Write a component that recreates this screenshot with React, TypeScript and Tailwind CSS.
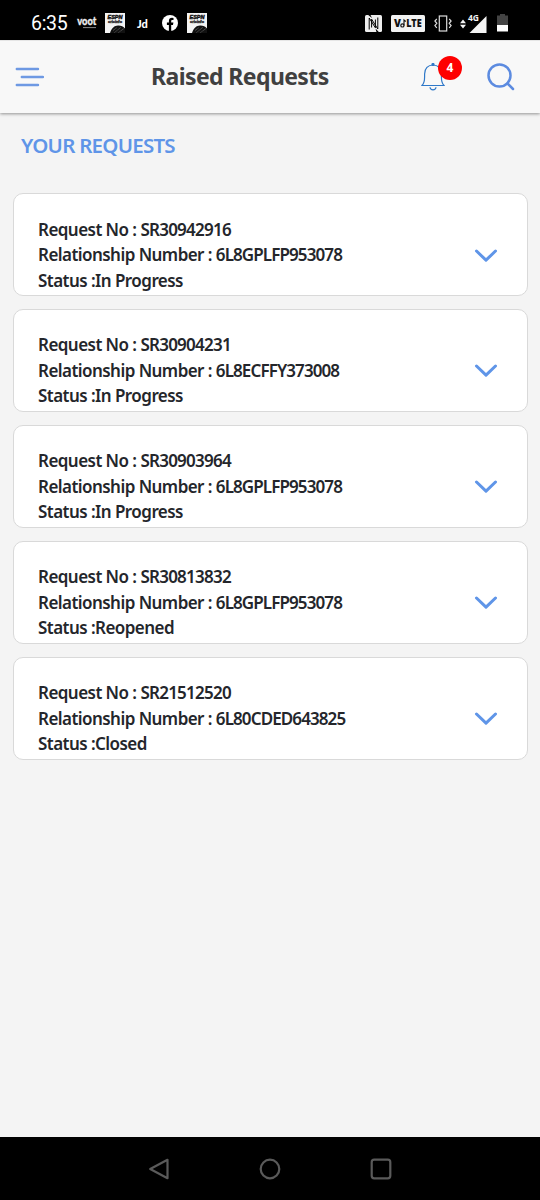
import clsx from "clsx";

interface ServiceRequest {
  id: string;
  relationship: string;
  status: string;
}

const REQUESTS: ServiceRequest[] = [
  { id: "SR30942916", relationship: "6L8GPLFP953078", status: "In Progress" },
  { id: "SR30904231", relationship: "6L8ECFFY373008", status: "In Progress" },
  { id: "SR30903964", relationship: "6L8GPLFP953078", status: "In Progress" },
  { id: "SR30813832", relationship: "6L8GPLFP953078", status: "Reopened" },
  { id: "SR21512520", relationship: "6L80CDED643825", status: "Closed" },
];

function CricinfoIcon({ className }: { className?: string }) {
  return (
    <svg viewBox="0 0 20 20" className={clsx("h-5 w-5 shrink-0 font-['Liberation_Sans',sans-serif]", className)}>
      <rect width="20" height="20" fill="#f4f4f4" />
      <text x="2.5" y="6" fontSize="5" fontWeight="900" fontStyle="italic" stroke="#111" strokeWidth=".4" textLength="15" lengthAdjust="spacingAndGlyphs" fill="#111">ESPN</text>
      <text x="3" y="10.2" fontSize="3.2" fontWeight="700" stroke="#222" strokeWidth=".3" textLength="14" lengthAdjust="spacingAndGlyphs" fill="#222">cricinfo</text>
      <path d="M5 20C6.5 15 9.5 12.8 13 12.6C16 12.5 18.5 13.6 20 15.5V20Z" fill="#111" />
      <path d="M8 17.5L12 14.5M9.5 19.5L16 14.2M13.5 19.5L19 15.5" stroke="#777" strokeWidth=".7" strokeDasharray="1 .5" />
    </svg>
  );
}

function StatusBar() {
  return (
    <div className="flex h-10 items-center bg-black pt-1.5 text-white">
      <span className="ml-[31px] w-[37px] pt-0.5 font-['Roboto'] text-[19.5px] leading-none tracking-[-0.3px]">6:35</span>
      <svg viewBox="0 0 22 18" className="ml-2 h-[18px] w-[22px] shrink-0 font-['Lato']">
        <text x="1.2" y="11" fontSize="11" fontWeight="900" textLength="19" lengthAdjust="spacingAndGlyphs" stroke="#eee" strokeWidth=".3" fill="#eee">voot</text>
        <path d="M7 13.6H20" stroke="#888" strokeWidth="1" />
      </svg>
      <CricinfoIcon className="ml-[7px]" />
      <span className="ml-3 w-3 font-['Lato'] text-[11px] leading-none font-black">Jd</span>
      <svg viewBox="0 0 16 16" className="ml-[13px] h-4 w-4 shrink-0">
        <circle cx="8" cy="8" r="8" fill="#fff" />
        <path d="M6.9 16V10H4.9V7.6H6.9V6C6.9 3.9 8.1 2.8 10 2.8L11.5 2.9V5H10.5C9.5 5 9.2 5.5 9.2 6.2V7.6H11.4L11 10H9.2V16Z" fill="#000" />
      </svg>
      <CricinfoIcon className="ml-[9px]" />

      <svg viewBox="0 0 17 17" className="ml-auto h-[17px] w-[17px] shrink-0">
        <rect width="17" height="17" rx="1.5" fill="#eee" />
        <path d="M4.2 14.5V3L10.4 12.8M12.8 2.5V14L6.6 4.2V12.5M10.4 12.8V4.5" fill="none" stroke="#000" strokeWidth="1" />
        <path d="M3.2 0H5.5L7 3M11.5 17H13.8L10.5 13.5" fill="#000" />
      </svg>
      <svg viewBox="0 0 34 17" className="ml-[9px] h-[17px] w-[34px] shrink-0">
        <rect width="34" height="17" rx="1.5" fill="#f2f2f2" />
        <text x="3" y="12.2" fontSize="10" fontWeight="900" fill="#111">V</text>
        <circle cx="11.4" cy="10.4" r="1.6" fill="none" stroke="#111" strokeWidth="1.2" />
        <path d="M13 10.5V5L14.8 6.5" fill="none" stroke="#111" strokeWidth="1.1" />
        <text x="15.2" y="12.2" fontSize="10" fontWeight="900" textLength="15.5" lengthAdjust="spacingAndGlyphs" fill="#111">LTE</text>
      </svg>
      <svg viewBox="0 0 18 17" className="ml-[9px] h-[17px] w-[18px] shrink-0" fill="none" stroke="#ddd" strokeWidth="1.2">
        <rect x="5.3" y="1" width="7.4" height="15" />
        <path d="M2.8 3.8L.9 6L2.8 8.3L.9 10.6L2.8 12.9M15.2 3.8L17.1 6L15.2 8.3L17.1 10.6L15.2 12.9" />
      </svg>
      <svg viewBox="0 0 27 22" className="mb-[3px] ml-2 h-[22px] w-[27px] shrink-0" fill="#f5f5f5">
        <path d="M3 8.6L6 12.2H0ZM3 17.4L0 13.8H6Z" />
        <path d="M9.5 22L26.5 5V22Z" />
        <text x="8" y="9.6" fontSize="8" fontWeight="700" textLength="11" lengthAdjust="spacingAndGlyphs" stroke="#000" strokeWidth="1.5" paintOrder="stroke">4G</text>
      </svg>
      <svg viewBox="0 0 11 18" className="mr-8 ml-2.5 h-[18px] w-[11px] shrink-0">
        <path d="M3 0H8V1.5H11V11H0V1.5H3Z" fill="#444" />
        <path d="M0 11H11V17.5H0Z" fill="#fff" />
      </svg>
    </div>
  );
}

function Header() {
  return (
    <header className="relative flex h-[73px] items-center border-t border-[#e5e5e5] bg-[#f8f8f8] shadow-[0_1px_3px_rgba(0,0,0,0.4)]">
      <svg viewBox="0 0 30 20" className="ml-[14px] h-5 w-[30px]" stroke="#6e99e3" strokeWidth="2.4" strokeLinecap="round">
        <path d="M2.8 2H24M7.8 10H29M2.8 18H24" />
      </svg>
      <h1 className="mb-[3px] ml-[107px] w-[180px] text-[23px] leading-8 font-bold tracking-[-0.6px] whitespace-nowrap text-[#404040]">Raised Requests</h1>
      <div className="relative ml-[90px] h-[28px] w-6">
        <svg viewBox="0 0 24 28" className="h-7 w-6" fill="none" stroke="#2f78c8" strokeWidth="1.2">
          <path d="M1 22.5C3 20.5 3.6 18.5 3.6 14V11C3.6 5.5 7 2 12 2S20.4 5.5 20.4 11V14C20.4 18.5 21 20.5 23 22.5Z" />
          <path d="M9 24.3C9.3 27.7 14.7 27.7 15 24.3" />
          <circle cx="12" cy="1.5" r="1" fill="#2f78c8" />
        </svg>
        <span className="absolute -top-[7px] left-[17px] flex h-6 w-6 items-center justify-center rounded-full bg-[#fe0000] text-[12px] font-bold text-white">4</span>
      </div>
      <svg viewBox="0 0 28 28" className="ml-[42px] h-7 w-7" fill="none" stroke="#5c8be0" strokeWidth="2.5" strokeLinecap="round">
        <circle cx="12.5" cy="12.5" r="11" />
        <path d="M20.5 20.5L26 26" />
      </svg>
    </header>
  );
}

function RequestCard({ request: r }: { request: ServiceRequest }) {
  return (
    <div className="flex h-[103px] items-start justify-between rounded-[10px] border-[1.5px] border-[#d9d9d9] bg-white pt-[22.5px] pr-[29px] pl-6">
      <div className="text-[17px] leading-[25.5px] font-semibold tracking-[-0.55px] whitespace-nowrap text-[#24262b]">
        <p>Request No : <span className="tracking-[-0.75px]">{r.id}</span></p>
        <p>Relationship Number : <span className="tracking-[-0.9px]">{r.relationship}</span></p>
        <p>Status :{r.status}</p>
      </div>
      <svg viewBox="0 0 24 14" className="mt-8 h-3.5 w-6" fill="none" stroke="#5f95e8" strokeWidth="3" strokeLinecap="round" strokeLinejoin="round">
        <path d="M2.5 2L12 11.2L21.5 2" />
      </svg>
    </div>
  );
}

function NavBar() {
  return (
    <nav className="flex h-[63px] items-center justify-center gap-[89px] bg-black">
      <svg viewBox="0 0 22 22" className="h-[22px] w-[22px]" fill="none" stroke="#5a5a5a" strokeWidth="2.2" strokeLinejoin="round">
        <path d="M2.2 11L19.5 1.8V20.2Z" />
      </svg>
      <svg viewBox="0 0 22 22" className="h-[22px] w-[22px]" fill="none" stroke="#5a5a5a" strokeWidth="2.2">
        <circle cx="11" cy="11" r="9.3" />
      </svg>
      <svg viewBox="0 0 22 22" className="h-[22px] w-[22px]" fill="none" stroke="#5a5a5a" strokeWidth="2.2">
        <rect x="1.7" y="1.7" width="18.6" height="18.6" rx="2.5" />
      </svg>
    </nav>
  );
}

export default function App() {
  return (
    <div className="flex h-[1200px] w-[540px] flex-col overflow-hidden bg-[#f4f4f4] font-['Noto_Sans',sans-serif]">
      <StatusBar />
      <Header />
      <main className="flex-1 px-[13px]">
        <h2 className="mt-4 ml-2 text-[20.5px] leading-8 font-semibold tracking-[-0.75px] text-[#5f95e8]">YOUR REQUESTS</h2>
        <div className="mt-8 mr-[-1px] flex flex-col gap-[12.9px]">
          {REQUESTS.map(r => <RequestCard key={r.id} request={r} />)}
        </div>
      </main>
      <NavBar />
    </div>
  );
}
